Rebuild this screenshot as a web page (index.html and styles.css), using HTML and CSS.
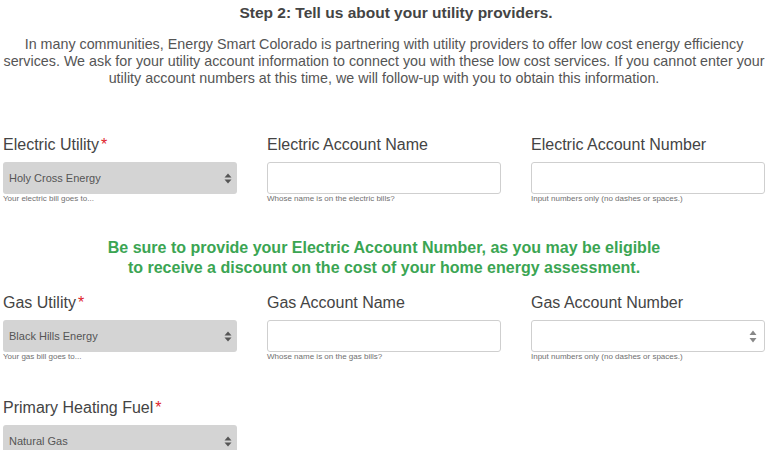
FILE: index.html
```html
<!DOCTYPE html>
<html>
<head>
<meta charset="utf-8">
<link rel="stylesheet" href="styles.css">
</head>
<body>
<div class="page">
  <h2 class="title">Step 2: Tell us about your utility providers.</h2>
  <p class="intro">In many communities, Energy Smart Colorado is partnering with utility providers to offer low cost energy efficiency services. We ask for your utility account information to connect you with these low cost services. If you cannot enter your utility account numbers at this time, we will follow-up with you to obtain this information.</p>

  <div class="row row-electric">
    <div class="field">
      <div class="label">Electric Utility<span class="req">*</span></div>
      <div class="select"><span>Holy Cross Energy</span>
        <svg class="arrows" width="8" height="11" viewBox="0 0 8 11"><path d="M4 0.5 L7.5 4.5 H0.5 Z M4 10.5 L7.5 6.5 H0.5 Z" fill="#555"/></svg>
      </div>
      <div class="help">Your electric bill goes to...</div>
    </div>
    <div class="field">
      <div class="label">Electric Account Name</div>
      <div class="input"></div>
      <div class="help">Whose name is on the electric bills?</div>
    </div>
    <div class="field">
      <div class="label">Electric Account Number</div>
      <div class="input"></div>
      <div class="help">Input numbers only (no dashes or spaces.)</div>
    </div>
  </div>

  <p class="notice">Be sure to provide your Electric Account Number, as you may be eligible<br>to receive a discount on the cost of your home energy assessment.</p>

  <div class="row row-gas">
    <div class="field">
      <div class="label">Gas Utility<span class="req">*</span></div>
      <div class="select"><span>Black Hills Energy</span>
        <svg class="arrows" width="8" height="11" viewBox="0 0 8 11"><path d="M4 0.5 L7.5 4.5 H0.5 Z M4 10.5 L7.5 6.5 H0.5 Z" fill="#555"/></svg>
      </div>
      <div class="help">Your gas bill goes to...</div>
    </div>
    <div class="field">
      <div class="label">Gas Account Name</div>
      <div class="input"></div>
      <div class="help">Whose name is on the gas bills?</div>
    </div>
    <div class="field">
      <div class="label">Gas Account Number</div>
      <div class="input spin">
        <svg class="arrows" width="8" height="13" viewBox="0 0 8 13"><path d="M4 0.5 L7.5 5 H0.5 Z M4 12.5 L7.5 8 H0.5 Z" fill="#888"/></svg>
      </div>
      <div class="help">Input numbers only (no dashes or spaces.)</div>
    </div>
  </div>

  <div class="row row-fuel">
    <div class="field">
      <div class="label">Primary Heating Fuel<span class="req">*</span></div>
      <div class="select"><span>Natural Gas</span>
        <svg class="arrows" width="8" height="11" viewBox="0 0 8 11"><path d="M4 0.5 L7.5 4.5 H0.5 Z M4 10.5 L7.5 6.5 H0.5 Z" fill="#555"/></svg>
      </div>
    </div>
  </div>
</div>
</body>
</html>
```

FILE: styles.css
```css
html, body {
  margin: 0;
  padding: 0;
  background: #fff;
}
body {
  font-family: "Liberation Sans", Arial, sans-serif;
  color: #555;
  overflow: hidden;
}
.page {
  width: 773px;
  padding: 0 8px 0 3px;
  box-sizing: border-box;
}
.title {
  margin: 3px 0 0 0;
  font-size: 15.5px;
  line-height: 20px;
  font-weight: bold;
  text-align: center;
  color: #444;
  padding-left: 24px;
}
.intro {
  margin: 13px 0 0 0;
  font-size: 14.3px;
  line-height: 17px;
  text-align: center;
  color: #555;
}
.row {
  display: grid;
  grid-template-columns: 234px 234px 234px;
  column-gap: 30px;
}
.row-electric { margin-top: 48px; }
.row-gas { margin-top: 15px; }
.row-fuel { margin-top: 36px; }
.label {
  font-size: 16px;
  line-height: 20px;
  color: #444;
  margin-bottom: 7px;
}
.req {
  color: #e0262b;
  margin-left: 2px;
}
.select {
  height: 32px;
  background: #d4d4d4;
  border-radius: 3px;
  display: flex;
  align-items: center;
  justify-content: space-between;
  padding: 0 5px 0 6px;
  box-sizing: border-box;
  font-size: 11px;
  color: #555;
}
.select .arrows { margin-top: 1px; }
.input {
  height: 32px;
  border: 1px solid #cfcfcf;
  border-radius: 3px;
  box-sizing: border-box;
  background: #fff;
}
.input.spin {
  display: flex;
  align-items: center;
  justify-content: flex-end;
  padding-right: 7px;
}
.help {
  font-size: 8px;
  line-height: 10px;
  color: #707070;
}
.notice {
  margin: 34px 0 0 0;
  font-size: 16px;
  line-height: 20px;
  font-weight: bold;
  color: #3ba553;
  text-align: center;
}
```
